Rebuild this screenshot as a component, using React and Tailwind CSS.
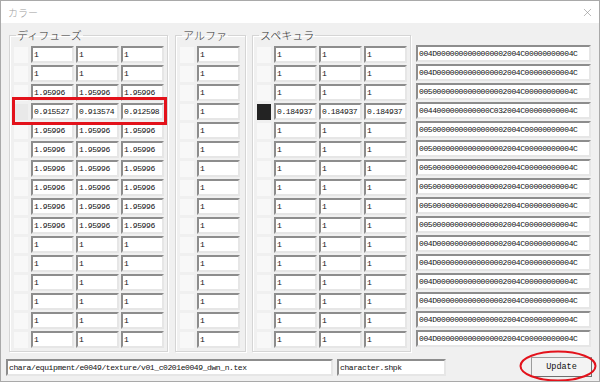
import { X } from 'lucide-react'

const mono = { fontFamily: '"Liberation Mono", "DejaVu Sans Mono", monospace' }

const diffuse = [
  ['1', '1', '1'],
  ['1', '1', '1'],
  ['1.95996', '1.95996', '1.95996'],
  ['0.915527', '0.913574', '0.912598'],
  ...Array(6).fill(['1.95996', '1.95996', '1.95996']),
  ...Array(6).fill(['1', '1', '1']),
]

const specular = Array.from({ length: 16 }, (_, i) =>
  i === 3 ? ['0.184937', '0.184937', '0.184937'] : ['1', '1', '1']
)

const hex = Array.from({ length: 16 }, (_, i) => {
  if (i === 3) return '0044000000000000C032004C00000000004C'
  if (i === 2 || (i >= 4 && i <= 9)) return '00500000000000000002004C00000000004C'
  return '004D0000000000000002004C00000000004C'
})

function Field({ value, className = 'w-[43px]' }) {
  return (
    <div
      className={`h-[17px] shrink-0 border-2 border-t-[#8d8d8d] border-l-[#8d8d8d] border-r-[#e6e6e6] border-b-[#e6e6e6] bg-white pl-[1px] text-[8px] leading-[13px] tracking-[-0.4px] text-[#111] whitespace-nowrap overflow-hidden ${className}`}
      style={mono}
    >
      {value}
    </div>
  )
}

function Swatch({ dark, tint }) {
  return (
    <div
      className={`h-[16px] w-[14px] shrink-0 ${dark ? 'bg-[#232323]' : tint ? 'bg-[#e9e9e9]' : 'bg-[#f8f8f8]'}`}
    />
  )
}

function Group({ title, children, className = '' }) {
  return (
    <fieldset
      className={`shrink-0 border border-[#d5d5d5] shadow-[inset_1px_1px_0_#fff,1px_1px_0_#fff] pl-[4px] pb-[3px] pt-[5px] ${className}`}
    >
      <legend className="ml-[2px] px-[1px] text-[11px] leading-[12px] font-light text-[#333]">{title}</legend>
      <div className="flex flex-col gap-[2px]">{children}</div>
    </fieldset>
  )
}

export default function App() {
  return (
    <div
      className="relative w-[600px] h-[382px] overflow-hidden border border-[#a9a9a9] bg-[#f0f0f0] flex flex-col"
      style={{ fontFamily: '"Noto Sans CJK JP", "Noto Sans", sans-serif' }}
    >
      <div className="h-[22px] shrink-0 bg-white flex items-center justify-between pl-[7px] pr-[5px]">
        <span className="text-[10px] font-light text-[#a0a0a0]">カラー</span>
        <X className="h-[13px] w-[13px] text-[#8a8a8a]" strokeWidth={1.1} />
      </div>

      <div className="flex pl-[8px] pt-[6px] items-start">
        <Group title="ディフューズ" className="w-[159px]">
          {diffuse.map((r, i) => (
            <div key={i} className="flex items-center">
              <Swatch tint={i === 3} />
              <div className="ml-[3px] flex gap-[2px]">
                {r.map((v, j) => (
                  <Field key={j} value={v} />
                ))}
              </div>
            </div>
          ))}
        </Group>

        <Group title="アルファ" className="w-[71px] ml-[7px]">
          {diffuse.map((_, i) => (
            <div key={i} className="flex items-center">
              <Swatch />
              <div className="ml-[3px]">
                <Field value="1" />
              </div>
            </div>
          ))}
        </Group>

        <Group title="スペキュラ" className="w-[159px] ml-[6px]">
          {specular.map((r, i) => (
            <div key={i} className="flex items-center">
              <Swatch dark={i === 3} />
              <div className="ml-[3px] flex gap-[2px]">
                {r.map((v, j) => (
                  <Field key={j} value={v} />
                ))}
              </div>
            </div>
          ))}
        </Group>

        <div className="ml-[5px] mt-[16px] flex flex-col gap-[2px]">
          {hex.map((h, i) => (
            <Field key={i} value={h} className="w-[175px]" />
          ))}
        </div>
      </div>

      <div className="flex items-center pl-[5px] mt-[5px]">
        <Field value="chara/equipment/e0049/texture/v01_c0201e0049_dwn_n.tex" className="w-[327px]" />
        <Field value="character.shpk" className="w-[109px] ml-[4px]" />
        <button className="ml-[85px] h-[20px] w-[61px] border border-[#9c9c9c] border-r-[#6f6f6f] border-b-[#6f6f6f] bg-[#f3f3f3] text-[8.5px] text-[#111]" style={mono}>
          Update
        </button>
      </div>

      <div className="absolute left-[11px] top-[96px] w-[155px] h-[28px] border-[3px] border-[#e3121b]" />
      <svg className="absolute left-[517px] top-[348px]" width="80" height="33" viewBox="0 0 80 33">
        <ellipse cx="40" cy="17" rx="37.5" ry="14.5" fill="none" stroke="#e3121b" strokeWidth="2" />
      </svg>
    </div>
  )
}
